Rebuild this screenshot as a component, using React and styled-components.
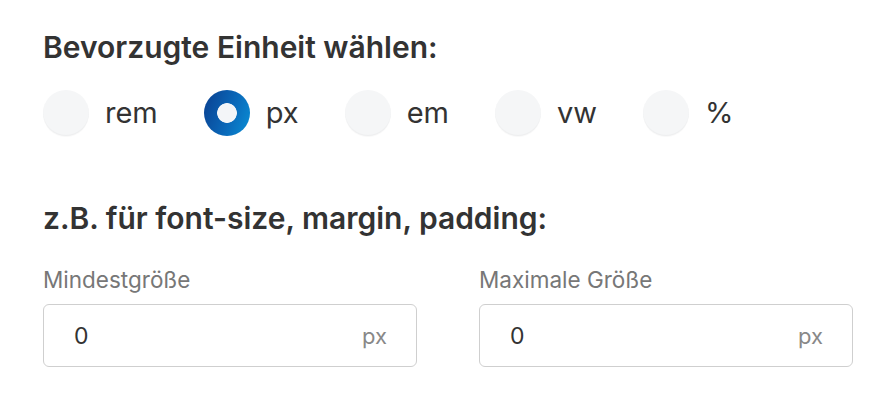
import React from 'react';
import styled, { createGlobalStyle } from 'styled-components';

const GlobalStyle = createGlobalStyle`
  html, body {
    margin: 0;
    padding: 0;
    background: #ffffff;
  }
  body {
    font-family: Inter, "Noto Sans", sans-serif;
    color: #333333;
  }
`;

const UNITS = ['rem', 'px', 'em', 'vw', '%'];

const App = () => {
  const [unit, setUnit] = React.useState('px');

  return (
    <>
      <GlobalStyle />
      <Wrapper>
        <Heading>Bevorzugte Einheit wählen:</Heading>
        <RadioRow>
          {UNITS.map(u => (
            <RadioItem key={u} onClick={() => setUnit(u)}>
              <RadioDot selected={u === unit} />
              <RadioLabel>{u}</RadioLabel>
            </RadioItem>
          ))}
        </RadioRow>

        <SubHeading>z.B. für font-size, margin, padding:</SubHeading>
        <FieldGrid>
          <Field>
            <FieldLabel>Mindestgröße</FieldLabel>
            <InputBox>
              <Value>0</Value>
              <Suffix>px</Suffix>
            </InputBox>
          </Field>
          <Field>
            <FieldLabel>Maximale Größe</FieldLabel>
            <InputBox>
              <Value>0</Value>
              <Suffix>px</Suffix>
            </InputBox>
          </Field>
        </FieldGrid>
      </Wrapper>
    </>
  );
};

const Wrapper = styled.div`
  padding: 29px 0 0 43px;
  width: 885px;
  box-sizing: border-box;
`;

const Heading = styled.h2`
  margin: 0;
  font-size: 30px;
  line-height: 36px;
  font-weight: 600;
  color: #333333;
`;

const RadioRow = styled.div`
  display: flex;
  align-items: center;
  gap: 46px;
  margin-top: 25px;
`;

const RadioItem = styled.label`
  display: flex;
  align-items: center;
  gap: 16px;
  cursor: pointer;
`;

const RadioDot = styled.span`
  width: 46px;
  height: 46px;
  border-radius: 50%;
  box-sizing: border-box;
  background: ${p =>
    p.selected
      ? 'radial-gradient(circle, #f3f5f8 0 9.5px, transparent 10.2px), linear-gradient(110deg, #0a3f8f 0%, #0a67b8 55%, #0a8fd6 100%)'
      : '#f5f6f7'};
  box-shadow: ${p =>
    p.selected ? 'none' : 'inset 0 -1px 1px rgba(0, 0, 0, 0.035), 0 1px 1px rgba(0, 0, 0, 0.03)'};
`;

const RadioLabel = styled.span`
  font-size: 29px;
  line-height: 34px;
  font-weight: 400;
  color: #333333;
`;

const SubHeading = styled(Heading)`
  margin-top: 64px;
`;

const FieldGrid = styled.div`
  display: grid;
  grid-template-columns: 374px 374px;
  column-gap: 62px;
  margin-top: 31px;
`;

const Field = styled.div`
  display: flex;
  flex-direction: column;
  gap: 11px;
`;

const FieldLabel = styled.span`
  font-size: 22.5px;
  line-height: 26px;
  color: #777777;
`;

const InputBox = styled.div`
  height: 63px;
  box-sizing: border-box;
  border: 1.5px solid #cfcfcf;
  border-radius: 6px;
  display: flex;
  align-items: center;
  justify-content: space-between;
  padding: 0 29px 0 30px;
`;

const Value = styled.span`
  font-size: 23px;
  color: #333333;
`;

const Suffix = styled.span`
  font-size: 22px;
  color: #888888;
`;

export default App;
